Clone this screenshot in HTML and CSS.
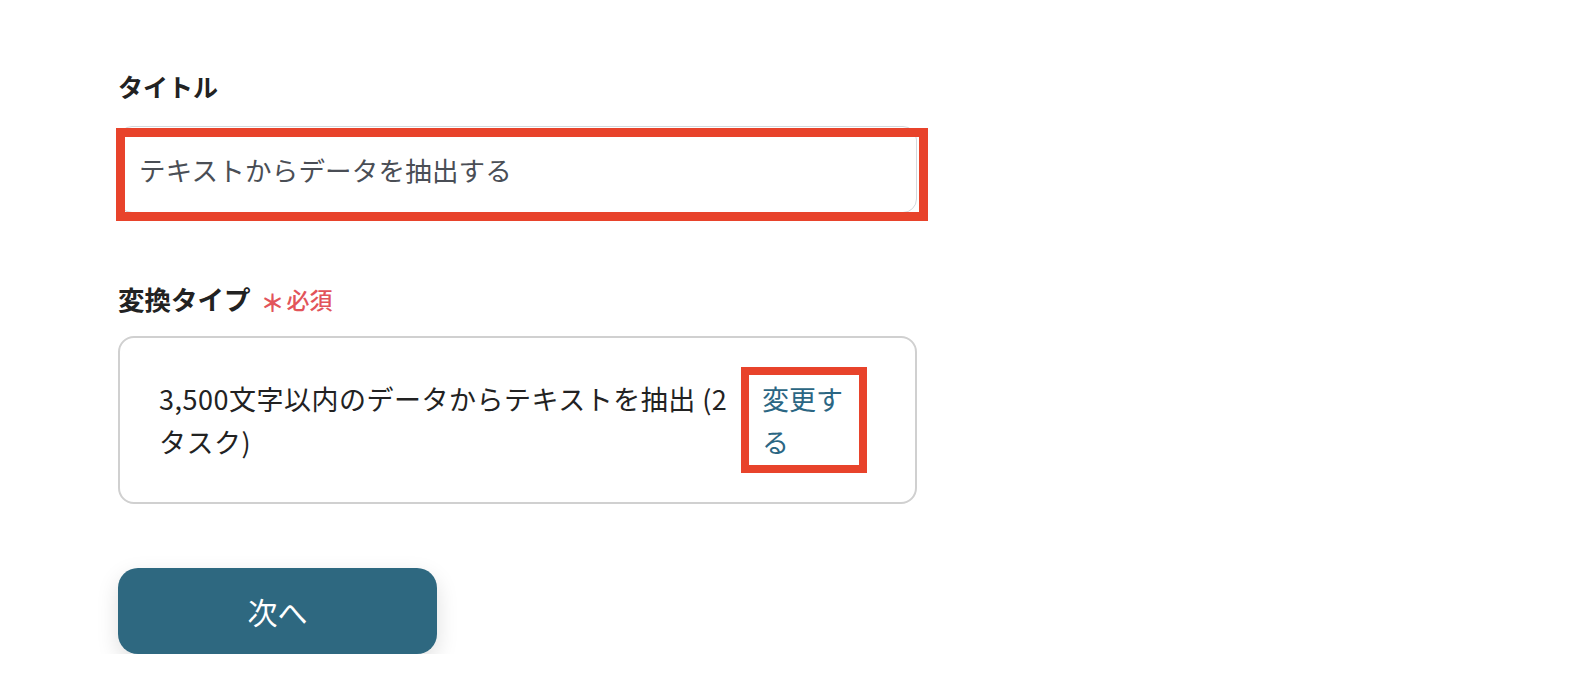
FILE: index.html
```html
<!DOCTYPE html>
<html lang="ja">
<head>
<meta charset="utf-8">
<title>フォーム</title>
<link rel="stylesheet" href="styles.css">
</head>
<body>
<div class="form">
  <div class="field">
    <div class="label">タイトル</div>
    <div class="input-wrap">
      <div class="input">テキストからデータを抽出する</div>
      <div class="mark mark-input"></div>
    </div>
  </div>

  <div class="field field-type">
    <div class="label label-lg">変換タイプ<span class="req"><span class="ast">＊</span>必須</span></div>
    <div class="select-box">
      <div class="select-text">3,500文字以内のデータからテキストを抽出 (2タスク)</div>
      <div class="change">変更する<div class="mark mark-link"></div></div>
    </div>
  </div>

  <button class="next">次へ</button>
</div>
</body>
</html>
```

FILE: styles.css
```css
* { box-sizing: border-box; }
html, body { margin: 0; padding: 0; background: #fff; }
body {
  font-family: "Noto Sans CJK JP", "Noto Sans", sans-serif;
  color: #222;
}
.form {
  padding: 70px 0 0 118px;
  width: 930px;
}
.label {
  font-size: 25px;
  line-height: 32px;
  font-weight: 700;
  color: #222;
  display: flex;
  align-items: center;
}
.label-lg { font-size: 26.5px; }
.req {
  color: #e2545a;
  font-size: 23px;
  font-weight: 500;
  margin-left: 10px;
  display: flex;
  align-items: center;
}
.ast {
  font-size: 24px;
  font-weight: 700;
  margin-right: 2px;
  position: relative;
  top: 3px;
}
.input-wrap {
  position: relative;
  margin-top: 24px;
  width: 799px;
}
.input {
  height: 87px;
  border: 1px solid #d3d8dd;
  border-radius: 14px;
  padding-left: 20px;
  display: flex;
  align-items: center;
  font-size: 26.5px;
  letter-spacing: 0.2px;
  color: #4a4e55;
}
.mark {
  position: absolute;
  border: 9px solid #e8432b;
  pointer-events: none;
}
.mark-input {
  left: -2px;
  top: 2px;
  width: 812px;
  height: 93px;
}
.field-type { margin-top: 70px; }
.select-box {
  margin-top: 21px;
  width: 799px;
  height: 168px;
  border: 2px solid #d0d0d0;
  border-radius: 16px;
  padding: 0 0 0 39px;
  display: flex;
  align-items: center;
}
.select-text {
  flex: 0 0 590px;
  font-size: 27px;
  line-height: 43px;
  letter-spacing: 0.5px;
  color: #222;
}
.change {
  position: relative;
  width: 88px;
  margin-left: 13px;
  font-size: 27px;
  line-height: 43px;
  color: #2b6683;
}
.mark-link {
  left: -21px;
  right: -17px;
  top: -10px;
  bottom: -10px;
  border-width: 8px;
}
.next {
  display: block;
  margin-top: 64px;
  width: 319px;
  height: 86px;
  border: none;
  border-radius: 20px;
  background: #2e6880;
  color: #fff;
  font-family: inherit;
  font-size: 30px;
  box-shadow: 0 8px 22px rgba(0, 0, 0, 0.13);
}
```
